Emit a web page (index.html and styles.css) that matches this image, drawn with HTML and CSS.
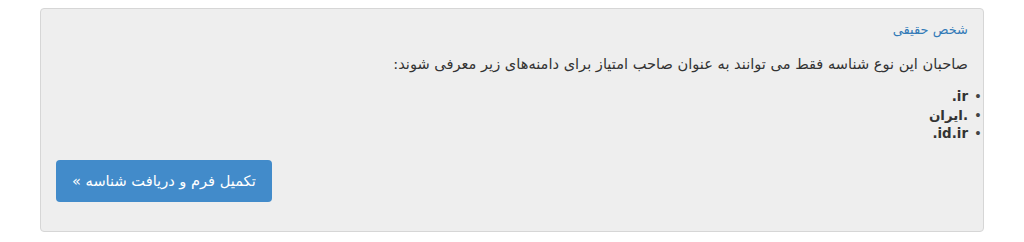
FILE: index.html
```html
<!DOCTYPE html>
<html lang="fa" dir="rtl">

<head>
     <meta charset="UTF-8">
     <title>شخص حقیقی</title>
     <meta name="viewport" content="width=device-width, initial-scale=1.0">
     <link rel="stylesheet" href="styles.css">
</head>

<body>

     <div class="panel">
          <h4 class="panel-title">شخص حقیقی</h4>
          <p class="intro">صاحبان این نوع شناسه فقط می توانند به عنوان صاحب امتیاز برای دامنه‌های زیر معرفی شوند:</p>
          <ul class="domains">
               <li>ir.</li>
               <li>.ایران</li>
               <li>id.ir.</li>
          </ul>
          <div class="actions">
               <a href="#" class="btn">تکمیل فرم و دریافت شناسه &raquo;</a>
          </div>
     </div>

</body>

</html>
```

FILE: styles.css
```css
* {
     box-sizing: border-box;
     margin: 0;
     padding: 0;
}

body {
     font-family: 'DejaVu Sans', sans-serif;
     font-size: 14px;
     color: #333;
     background: #fff;
     padding: 8px 40px 0;
}

.panel {
     background: #eeeeee;
     border: 1px solid #d6d6d6;
     border-radius: 4px;
     padding: 12px 15px 29px;
}

.panel-title {
     font-size: 13px;
     font-weight: normal;
     color: #337ab7;
     line-height: 18px;
     margin-bottom: 15px;
}

.intro {
     font-size: 14.6px;
     line-height: 20px;
     margin-bottom: 14px;
}

.domains {
     list-style: none;
     margin-right: -20px;
     font-size: 13.4px;
     font-weight: bold;
     line-height: 18.5px;
}

.domains li::before {
     content: "•";
     display: inline-block;
     width: 20px;
     text-align: center;
     font-weight: normal;
     color: #444;
}

.actions {
     display: flex;
     justify-content: flex-end;
     margin-top: 16px;
}

.btn {
     display: inline-block;
     background: #428bca;
     color: white;
     text-decoration: none;
     font-size: 14.6px;
     padding: 10px 16px;
     line-height: 22px;
     border-radius: 4px;
}
```
